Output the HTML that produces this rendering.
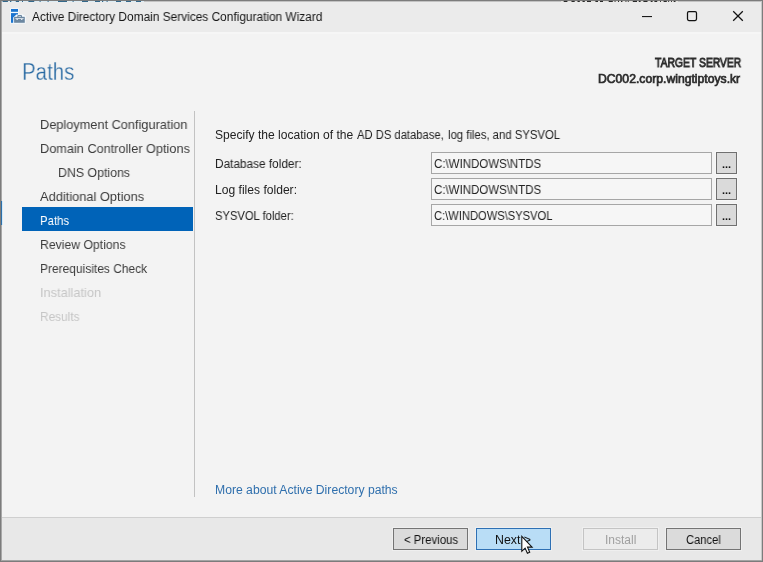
<!DOCTYPE html>
<html><head><meta charset="utf-8">
<style>
html,body{margin:0;padding:0;}
body{width:763px;height:562px;overflow:hidden;background:#7c7c7c;font-family:"Liberation Sans",sans-serif;position:relative;}
.a,.t{position:absolute;}
.t{white-space:nowrap;transform-origin:0 50%;will-change:transform;}
#win{left:2px;top:1px;width:759px;height:559px;background:#f3f3f3;}
#bl{left:1px;top:1px;width:1px;height:560px;background:#a8a8a8;}
#br{left:761px;top:1px;width:1px;height:560px;background:#c8c8c8;}
#bbm{left:1px;top:560px;width:761px;height:1px;background:#a4a4a4;}
#tbar{left:2px;top:1px;width:759px;height:30.5px;background:#ebebeb;}
#foot{left:2px;top:517px;width:759px;height:43px;background:#e8e8e8;border-top:1px solid #cfcfcf;box-sizing:border-box;}
#sel{left:22px;top:207px;width:171px;height:24px;background:#0063b8;}
#vline{left:193.9px;top:111px;width:1.2px;height:386px;background:#c2c2c2;}
.inp{left:431px;width:281px;height:22px;box-sizing:border-box;border:1px solid #a6a6a6;background:#f6f6f6;}
.bb,.btn{box-shadow:0 0 0 1px rgba(255,255,255,.32);}
.bb{left:716px;width:21px;height:22px;box-sizing:border-box;border:1px solid #707070;background:#dadada;}
.btn{top:528.4px;width:75px;height:21.4px;box-sizing:border-box;border:1px solid #747474;background:#dbdbdb;}
#title{left:31.90px;top:9px;font-size:12px;line-height:16px;color:#151515;font-weight:normal;transform:scaleX(0.9898);}
#h1{left:22.10px;top:57px;font-size:23px;line-height:30px;color:#2869a2;font-weight:normal;transform:scaleX(0.8902);}
#ts1{left:654.50px;top:55px;font-size:12px;line-height:16px;color:#2c2c2c;font-weight:normal;transform:scaleX(0.8625);}
#ts2{left:597.70px;top:71px;font-size:12px;line-height:16px;color:#2c2c2c;font-weight:normal;transform:scaleX(1.0150);}
#nav0{left:39.90px;top:116px;font-size:13px;line-height:17px;color:#3c3c3c;font-weight:normal;transform:scaleX(0.9813);}
#nav1{left:39.90px;top:140px;font-size:13px;line-height:17px;color:#3c3c3c;font-weight:normal;transform:scaleX(0.9783);}
#nav2{left:58.10px;top:164px;font-size:13px;line-height:17px;color:#3c3c3c;font-weight:normal;transform:scaleX(0.9491);}
#nav3{left:40.10px;top:188px;font-size:13px;line-height:17px;color:#3c3c3c;font-weight:normal;transform:scaleX(0.9867);}
#nav4{left:39.90px;top:212px;font-size:13px;line-height:17px;color:#ffffff;font-weight:normal;transform:scaleX(0.8738);}
#nav5{left:39.90px;top:236px;font-size:13px;line-height:17px;color:#3c3c3c;font-weight:normal;transform:scaleX(0.9403);}
#nav6{left:39.90px;top:260px;font-size:13px;line-height:17px;color:#3c3c3c;font-weight:normal;transform:scaleX(0.9212);}
#nav7{left:39.90px;top:284px;font-size:13px;line-height:17px;color:#c6c6c6;font-weight:normal;transform:scaleX(0.9832);}
#nav8{left:39.90px;top:308px;font-size:13px;line-height:17px;color:#c6c6c6;font-weight:normal;transform:scaleX(0.9134);}
#lbl0a{left:214.70px;top:127px;font-size:12px;line-height:16px;color:#222;font-weight:normal;transform:scaleX(1.0059);}
#lbl0b{left:356.70px;top:127px;font-size:12px;line-height:16px;color:#222;font-weight:normal;transform:scaleX(0.9354);}
#lbl0c{left:447.70px;top:127px;font-size:12px;line-height:16px;color:#222;font-weight:normal;transform:scaleX(0.9438);}
#lbl1{left:215.10px;top:156px;font-size:12px;line-height:16px;color:#222;font-weight:normal;transform:scaleX(0.9839);}
#lbl2{left:215.10px;top:182px;font-size:12px;line-height:16px;color:#222;font-weight:normal;transform:scaleX(1.0076);}
#lbl3{left:215.10px;top:208px;font-size:12px;line-height:16px;color:#222;font-weight:normal;transform:scaleX(0.9334);}
#inp0{left:434.30px;top:156px;font-size:12px;line-height:16px;color:#222;font-weight:normal;transform:scaleX(0.9569);}
#inp1{left:434.30px;top:182px;font-size:12px;line-height:16px;color:#222;font-weight:normal;transform:scaleX(0.9569);}
#inp2{left:434.30px;top:208px;font-size:12px;line-height:16px;color:#222;font-weight:normal;transform:scaleX(0.9302);}
#link{left:214.90px;top:482px;font-size:12px;line-height:16px;color:#2f6fad;font-weight:normal;transform:scaleX(1.0145);}
#bprev{left:403.70px;top:532px;font-size:12px;line-height:16px;color:#111;font-weight:normal;transform:scaleX(0.9496);}
#bnext{left:495.30px;top:532px;font-size:12px;line-height:16px;color:#111;font-weight:normal;transform:scaleX(1.0291);}
#binst{left:604.70px;top:532px;font-size:12px;line-height:16px;color:#a0a0a0;font-weight:normal;transform:scaleX(0.9868);}
#d0{left:722.10px;top:157px;font-size:11px;line-height:14px;color:#111;font-weight:bold;transform:scaleX(1.0000);}
#d1{left:722.10px;top:183px;font-size:11px;line-height:14px;color:#111;font-weight:bold;transform:scaleX(1.0000);}
#d2{left:722.10px;top:209px;font-size:11px;line-height:14px;color:#111;font-weight:bold;transform:scaleX(1.0000);}
#bcanc{left:686.30px;top:532px;font-size:12px;line-height:16px;color:#111;font-weight:normal;transform:scaleX(0.9300);}
#h1{-webkit-text-stroke:0.3px #f3f3f3;}
#ts1{-webkit-text-stroke:0.85px #2c2c2c;}
#ts2{-webkit-text-stroke:0.7px #2c2c2c;}
</style></head><body>
<div id="win" class="a"></div><div id="bl" class="a"></div><div id="br" class="a"></div><div id="bbm" class="a"></div>
<div class="a" style="left:1px;top:201px;width:1.1px;height:24px;background:#2b6fab"></div><div class="a" style="left:2.1px;top:201px;width:0.9px;height:24px;background:#d4eaf8"></div><div id="tbar" class="a"></div><div class="a" style="left:2px;top:31.5px;width:759px;height:2px;background:#f6f6f6"></div>
<div id="foot" class="a"></div>
<div id="sel" class="a"></div>
<div id="vline" class="a"></div>
<div class="a inp" style="top:152px"></div>
<div class="a inp" style="top:178px"></div>
<div class="a inp" style="top:204px"></div>
<div class="a bb" style="top:152px"></div>
<div class="a bb" style="top:178px"></div>
<div class="a bb" style="top:204px"></div>
<div class="a btn" style="left:393px"></div>
<div class="a btn" style="left:476px;background:#b9ddf6;border-color:#2e70b4"></div>
<div class="a btn" style="left:583px;border-color:#c4c4c4;background:#ececec"></div>
<div class="a btn" style="left:666px"></div>
<svg class="a" style="left:0;top:0" width="763" height="3" viewBox="0 0 763 3">
<rect x="2" y="1" width="759" height="1" fill="#c2c2c2"/>
<rect x="2" y="1" width="142" height="1" fill="#dcecf4"/>
<rect x="561" y="1" width="117" height="1" fill="#e4e2de"/>
<rect x="2.6" y="0.9" width="5.3" height="1.1" fill="#34688a"/>
<rect x="10" y="0.9" width="1.3" height="1.1" fill="#34688a"/>
<rect x="15.8" y="0.9" width="3.2" height="1.1" fill="#34688a"/>
<rect x="22" y="0.9" width="1.0" height="1.1" fill="#34688a"/>
<rect x="28.4" y="0.9" width="5.8" height="1.1" fill="#34688a"/>
<rect x="39.6" y="0.9" width="1.0" height="1.1" fill="#34688a"/>
<rect x="47.6" y="0.9" width="1.0" height="1.1" fill="#34688a"/>
<rect x="58" y="0.9" width="9.0" height="1.1" fill="#34688a"/>
<rect x="72.6" y="0.9" width="1.0" height="1.1" fill="#34688a"/>
<rect x="82" y="0.9" width="6.0" height="1.1" fill="#34688a"/>
<rect x="95" y="0.9" width="5.0" height="1.1" fill="#34688a"/>
<rect x="102" y="0.9" width="1.2" height="1.1" fill="#34688a"/>
<rect x="106.6" y="0.9" width="1.0" height="1.1" fill="#34688a"/>
<rect x="116" y="0.9" width="5.0" height="1.1" fill="#34688a"/>
<rect x="126" y="0.9" width="5.0" height="1.1" fill="#34688a"/>
<rect x="136" y="0.9" width="5.0" height="1.1" fill="#34688a"/>
<rect x="563.7" y="0.9" width="3.7" height="1.1" fill="#2a2a2a"/>
<rect x="571.5" y="0.9" width="3.2" height="1.1" fill="#2a2a2a"/>
<rect x="577.5" y="0.9" width="2.3" height="1.1" fill="#2a2a2a"/>
<rect x="582.5" y="0.9" width="2.3" height="1.1" fill="#2a2a2a"/>
<rect x="587" y="0.9" width="4.0" height="1.1" fill="#2a2a2a"/>
<rect x="595.4" y="0.9" width="2.6" height="1.1" fill="#2a2a2a"/>
<rect x="600" y="0.9" width="3.0" height="1.1" fill="#2a2a2a"/>
<rect x="608.7" y="0.9" width="4.1" height="1.1" fill="#2a2a2a"/>
<rect x="614.6" y="0.9" width="0.9" height="1.1" fill="#2a2a2a"/>
<rect x="618" y="0.9" width="1.0" height="1.1" fill="#2a2a2a"/>
<rect x="621" y="0.9" width="1.4" height="1.1" fill="#2a2a2a"/>
<rect x="625.5" y="0.9" width="0.9" height="1.1" fill="#2a2a2a"/>
<rect x="627.8" y="0.9" width="0.9" height="1.1" fill="#2a2a2a"/>
<rect x="632.8" y="0.9" width="4.2" height="1.1" fill="#2a2a2a"/>
<rect x="638.8" y="0.9" width="1.8" height="1.1" fill="#2a2a2a"/>
<rect x="643.4" y="0.9" width="4.1" height="1.1" fill="#2a2a2a"/>
<rect x="650.7" y="0.9" width="1.9" height="1.1" fill="#2a2a2a"/>
<rect x="654.4" y="0.9" width="2.8" height="1.1" fill="#2a2a2a"/>
<rect x="660" y="0.9" width="0.9" height="1.1" fill="#2a2a2a"/>
<rect x="663.6" y="0.9" width="3.2" height="1.1" fill="#2a2a2a"/>
<rect x="668.2" y="0.9" width="0.9" height="1.1" fill="#2a2a2a"/>
<rect x="671" y="0.9" width="0.9" height="1.1" fill="#2a2a2a"/>
<rect x="673.7" y="0.9" width="1.8" height="1.1" fill="#2a2a2a"/>
</svg>
<div id="title" class="t">Active Directory Domain Services Configuration Wizard</div>
<div id="h1" class="t">Paths</div>
<div id="ts1" class="t">TARGET SERVER</div>
<div id="ts2" class="t">DC002.corp.wingtiptoys.kr</div>
<div id="nav0" class="t">Deployment Configuration</div>
<div id="nav1" class="t">Domain Controller Options</div>
<div id="nav2" class="t">DNS Options</div>
<div id="nav3" class="t">Additional Options</div>
<div id="nav4" class="t">Paths</div>
<div id="nav5" class="t">Review Options</div>
<div id="nav6" class="t">Prerequisites Check</div>
<div id="nav7" class="t">Installation</div>
<div id="nav8" class="t">Results</div>
<div id="lbl0a" class="t">Specify the location of the </div>
<div id="lbl0b" class="t">AD DS database, </div>
<div id="lbl0c" class="t">log files, and SYSVOL</div>
<div id="lbl1" class="t">Database folder:</div>
<div id="lbl2" class="t">Log files folder:</div>
<div id="lbl3" class="t">SYSVOL folder:</div>
<div id="inp0" class="t">C:\WINDOWS\NTDS</div>
<div id="inp1" class="t">C:\WINDOWS\NTDS</div>
<div id="inp2" class="t">C:\WINDOWS\SYSVOL</div>
<div id="link" class="t">More about Active Directory paths</div>
<div id="bprev" class="t">&lt; Previous</div>
<div id="bnext" class="t">Next &gt;</div>
<div id="binst" class="t">Install</div>
<div id="d0" class="t">...</div>
<div id="d1" class="t">...</div>
<div id="d2" class="t">...</div>
<div id="bcanc" class="t">Cancel</div>
<svg class="a" style="left:0;top:0" width="763" height="40" viewBox="0 0 763 40">
 <!-- app icon -->
 <g>
  <rect x="10.3" y="8.3" width="8.4" height="15.2" fill="#f4fbff" opacity="0.9"/>
  <rect x="11" y="9" width="7" height="2.8" fill="#1b74cf"/>
  <rect x="11" y="13.1" width="7" height="9.7" fill="#1b74cf"/>
  <path d="M13.2 23.6 V17.6 L16.4 14.4 H22.8 L25.7 16.2 V23.6 Z" fill="#f6fbff"/>
  <path d="M17.9 16.9 V16.1 Q17.9 15.6 18.5 15.6 H20.9 Q21.5 15.6 21.5 16.1 V16.9" fill="none" stroke="#6c87a1" stroke-width="1.1"/>
  <rect x="14.1" y="16.8" width="10.7" height="6" fill="#6c87a1"/>
  <path d="M15.4 18.3 H23.6 V19 H22.6 L22.1 19.9 H21.4 L20.9 19 H18 L17.5 19.9 H16.8 L16.3 19 H15.4 Z" fill="#f3f7fa"/>
 </g>
 <!-- minimize -->
 <rect x="642" y="16" width="10" height="1.1" fill="#1a1a1a"/>
 <!-- maximize -->
 <rect x="687.5" y="11.5" width="9" height="9" rx="1.4" fill="none" stroke="#111" stroke-width="1.25"/>
 <!-- close -->
 <path d="M733.2 11.2 L742.8 20.8 M742.8 11.2 L733.2 20.8" stroke="#111" stroke-width="1.25" fill="none"/>
</svg>
<svg class="a" style="left:515px;top:530px;z-index:10" width="26" height="30" viewBox="515 530 26 30">
 <path d="M521.8 536.3 V551.3 L525.1 548.1 L527.4 553.3 L529.7 552.3 L527.5 547.1 H532.1 Z" fill="#ffffff" stroke="#111" stroke-width="1.1" stroke-linejoin="miter"/>
</svg>

</body></html>
